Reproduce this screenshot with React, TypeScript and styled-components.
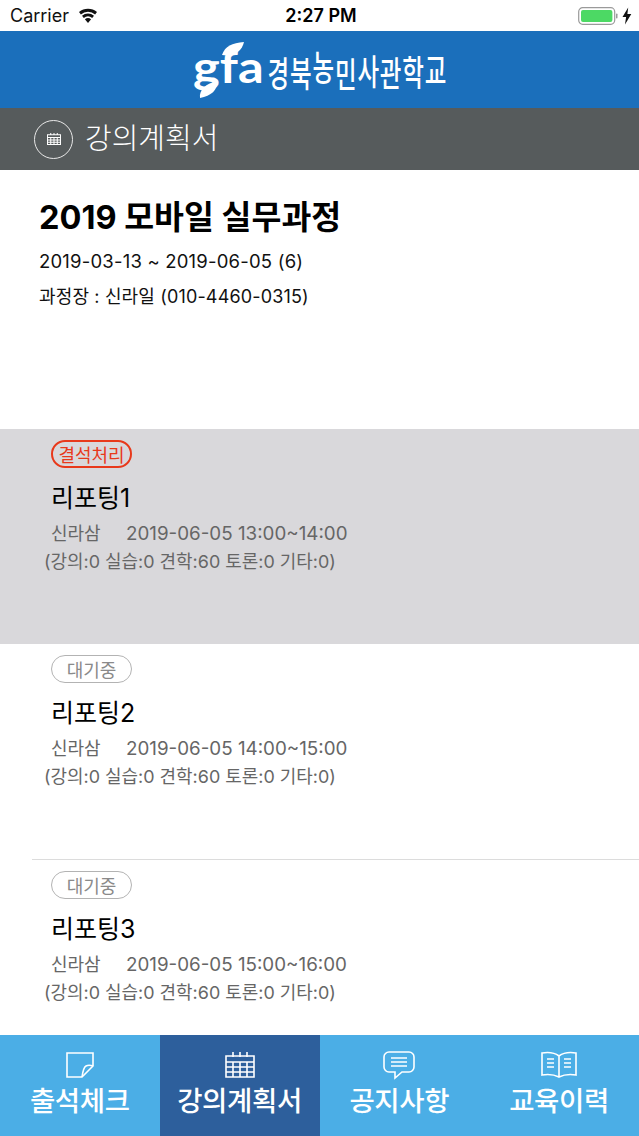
import React from "react";
import styled, { createGlobalStyle } from "styled-components";

const KR = `"Noto Sans CJK KR", "Inter", "Liberation Sans", sans-serif`;

const GlobalStyle = createGlobalStyle`
    html, body {
        margin: 0;
        padding: 0;
        background: #fff;
    }
    * {
        box-sizing: border-box;
    }
`;

const Page = styled.div`
    width: 639px;
    height: 1136px;
    display: flex;
    flex-direction: column;
    overflow: hidden;
    font-family: ${KR};
    color: #000;
`;

const StatusBar = styled.div`
    height: 31px;
    flex: none;
    display: grid;
    grid-template-columns: 1fr auto 1fr;
    align-items: center;
    padding: 0 7px 0 10px;
    font-family: "Inter", "Liberation Sans", sans-serif;
    background: #fff;
`;

const Carrier = styled.div`
    display: flex;
    align-items: center;
    gap: 9px;
    font-size: 18px;
    color: #111;
`;

const Clock = styled.div`
    font-weight: 600;
    font-size: 18px;
`;

const Power = styled.div`
    display: flex;
    justify-content: flex-end;
    align-items: center;
    gap: 4px;
`;

const Header = styled.header`
    height: 77px;
    flex: none;
    background: #1b6fbb;
    display: flex;
    align-items: center;
    justify-content: center;
    color: #fff;
`;

const LogoMark = styled.div`
    position: relative;
    display: flex;
    align-items: center;
    width: 75px;
    height: 77px;
`;

const LogoLetters = styled.span`
    font-family: "Lato", "Open Sans", sans-serif;
    font-weight: 700;
    font-size: 43px;
    line-height: 1;
    margin-top: -7px;
    transform: scaleX(1.18);
    transform-origin: left center;
`;

const LogoLeaf = styled.svg`
    position: absolute;
    left: 0;
    top: 0;
`;

const LogoName = styled.div`
    display: flex;
    width: 179px;
    justify-content: space-between;
    font-size: 23.5px;
    font-weight: 500;
    line-height: 1;
`;

const LogoChar = styled.span<{ $shift: number }>`
    display: block;
    transform: translateY(${(p) => p.$shift}px) scaleY(1.5);
`;

const SubHeader = styled.div`
    height: 62px;
    flex: none;
    background: #565b5c;
    display: flex;
    align-items: center;
    padding-left: 34px;
    gap: 12px;
    color: #fff;
    font-size: 29px;
    font-weight: 300;
    line-height: 1;
`;

const SubHeaderText = styled.span`
    margin-top: -6px;
`;

const RoundIcon = styled.div`
    width: 39px;
    height: 39px;
    border: 1px solid #e8e8e8;
    border-radius: 50%;
    display: flex;
    align-items: center;
    justify-content: center;
`;

const Course = styled.section`
    height: 259px;
    flex: none;
    padding: 26px 0 0 39px;
`;

const CourseTitle = styled.h1`
    margin: 0;
    font-family: "Inter", ${KR};
    font-size: 32.5px;
    line-height: 44px;
    font-weight: 700;
`;

const CourseDates = styled.div`
    font-size: 18.5px;
    letter-spacing: 0.2px;
    line-height: 35px;
    margin-top: 4px;
    color: #111;
    font-family: "Inter", ${KR};
`;

const CourseChief = styled(CourseDates)`
    font-size: 18px;
    letter-spacing: 0.15px;
    margin-top: 0;
`;

const Row = styled.article<{ $height: number; $active?: boolean; $line?: boolean }>`
    position: relative;
    height: ${(p) => p.$height}px;
    flex: none;
    background: ${(p) => (p.$active ? "#d9d8db" : "#fff")};
    padding: 11px 0 0 51px;
    ${(p) => (p.$line ? "&::after { content: ''; position: absolute; left: 32px; right: 0; bottom: 0; height: 1px; background: #dcdcdc; }" : "")}
`;

const Badge = styled.div<{ $alert?: boolean }>`
    width: 81px;
    height: 28px;
    border-radius: 14px;
    border: ${(p) => (p.$alert ? "2px solid #e8391b" : "1.5px solid #b3b3b3")};
    color: ${(p) => (p.$alert ? "#e8391b" : "#8a8a8a")};
    font-size: 18px;
    display: flex;
    align-items: center;
    justify-content: center;
    line-height: 1;
`;

const RowTitle = styled.div`
    font-size: 25px;
    line-height: 32px;
    margin-top: 14px;
    font-family: "Inter", ${KR};
`;

const RowMeta = styled.div`
    display: flex;
    color: #666;
    font-size: 18.8px;
    line-height: 28px;
    margin-top: 6px;
    font-family: "Inter", ${KR};
`;

const Teacher = styled.span`
    width: 75px;
    font-size: 18px;
`;

const RowHours = styled.div`
    color: #666;
    font-size: 17.95px;
    line-height: 28px;
    margin-left: -7px;
    font-family: "Inter", ${KR};
`;

const TabBar = styled.nav`
    flex: 1;
    display: grid;
    grid-template-columns: repeat(4, 1fr);
    background: #4baee6;
`;

const Tab = styled.div<{ $active?: boolean }>`
    display: flex;
    flex-direction: column;
    align-items: center;
    padding-top: 15px;
    background: ${(p) => (p.$active ? "#2d5f9c" : "transparent")};
    color: #fff;
`;

const TabIcon = styled.svg`
    width: 34px;
    height: 30px;
    flex: none;
    fill: none;
    stroke: #fff;
    stroke-width: 1.6;
`;

const BookIcon = styled(TabIcon)`
    width: 40px;
`;

const TabLabel = styled.span`
    font-size: 27.5px;
    font-weight: 500;
    line-height: 36px;
    margin-top: 1px;
    letter-spacing: -0.3px;
`;

function CalendarGlyph({ size }: { size: number }) {
    return (
        <svg width={size} height={size} viewBox="0 0 30 30" fill="none" stroke="#fff" strokeWidth={size < 20 ? 2.2 : 1.6}>
            <path d="M1 6h28v21H1zM1 12h28M1 17h28M1 22h28M8 12v15M15 12v15M22 12v15M8 2v5M15 2v5M22 2v5" />
        </svg>
    );
}

const logoChars: [string, number][] = [
    ["경", 3],
    ["북", 3],
    ["농", -3],
    ["민", 4],
    ["사", 1],
    ["관", 3],
    ["학", 2],
    ["교", 0],
];

const rows = [
    { title: "리포팅1", time: "2019-06-05 13:00~14:00", status: "결석처리", alert: true, height: 215 },
    { title: "리포팅2", time: "2019-06-05 14:00~15:00", status: "대기중", height: 216, line: true },
    { title: "리포팅3", time: "2019-06-05 15:00~16:00", status: "대기중", height: 175 },
];

export default function App() {
    return (
        <Page>
            <GlobalStyle />
            <StatusBar>
                <Carrier>
                    Carrier
                    <svg width="20" height="15" viewBox="0 0 20 15" fill="#111">
                        <path d="M10 15 6.9 11.2a5 5 0 0 1 6.2 0z" />
                        <path d="M5.8 9.9 4 7.7a9.4 9.4 0 0 1 12 0l-1.8 2.2a6.600 6.600 0 0 0-8.400 0z" />
                        <path d="M2.9 6.4 1 4.100a14 14 0 0 1 18 0l-1.900 2.300a11 11 0 0 0-14.200 0z" />
                    </svg>
                </Carrier>
                <Clock>2:27 PM</Clock>
                <Power>
                    <svg width="40" height="18" viewBox="0 0 40 18">
                        <rect x="0.7" y="0.7" width="36" height="16.600" rx="4" fill="none" stroke="#9a9a9a" strokeWidth="1.200" />
                        <rect x="3" y="3" width="31.400" height="12" rx="2" fill="#4cd964" />
                        <rect x="38" y="6.500" width="1.500" height="5" rx="0.700" fill="#9a9a9a" />
                    </svg>
                    <svg width="10" height="18" viewBox="0 0 10 17" fill="#111">
                        <path d="M6.200 0 0.500 9.600h3.600L3 17l6.300-10.400H5.400z" />
                    </svg>
                </Power>
            </StatusBar>

            <Header>
                <LogoMark>
                    <LogoLetters>gfa</LogoLetters>
                    <LogoLeaf width="75" height="77" viewBox="0 0 75 77" fill="#fff">
                        <path d="M29 24C32 15 39 12 51 11c-2 9-10 15-22 13z" />
                        <path d="M7 67c-1-8 5-14 17-17 1 9-6 15-17 17z" />
                    </LogoLeaf>
                </LogoMark>
                <LogoName>
                    {logoChars.map(([ch, shift]) => (
                        <LogoChar key={ch} $shift={shift}>
                            {ch}
                        </LogoChar>
                    ))}
                </LogoName>
            </Header>

            <SubHeader>
                <RoundIcon>
                    <CalendarGlyph size={14} />
                </RoundIcon>
                <SubHeaderText>강의계획서</SubHeaderText>
            </SubHeader>

            <Course>
                <CourseTitle>2019 모바일 실무과정</CourseTitle>
                <CourseDates>2019-03-13 ~ 2019-06-05 (6)</CourseDates>
                <CourseChief>과정장 : 신라일 (010-4460-0315)</CourseChief>
            </Course>

            {rows.map((row) => (
                <Row key={row.title} $height={row.height} $active={row.alert} $line={row.line}>
                    <Badge $alert={row.alert}>{row.status}</Badge>
                    <RowTitle>{row.title}</RowTitle>
                    <RowMeta>
                        <Teacher>신라삼</Teacher>
                        {row.time}
                    </RowMeta>
                    <RowHours>(강의:0 실습:0 견학:60 토론:0 기타:0)</RowHours>
                </Row>
            ))}

            <TabBar>
                <Tab>
                    <TabIcon viewBox="0 0 34 30">
                        <path d="M4 3h26v13l-11 11H4z" />
                        <path d="M30 16c-3-1-5-1-7 0-2 1-3 4-4 11" />
                    </TabIcon>
                    <TabLabel>출석체크</TabLabel>
                </Tab>
                <Tab $active>
                    <CalendarGlyph size={30} />
                    <TabLabel>강의계획서</TabLabel>
                </Tab>
                <Tab>
                    <TabIcon viewBox="0 0 34 30">
                        <path d="M7 2h20a5 5 0 0 1 5 5v10a5 5 0 0 1-5 5h-7l-7 6v-6H7a5 5 0 0 1-5-5V7a5 5 0 0 1 5-5z" />
                        <path d="M9 8h16M9 12h16M9 16h16" />
                    </TabIcon>
                    <TabLabel>공지사항</TabLabel>
                </Tab>
                <Tab>
                    <BookIcon viewBox="0 0 40 30">
                        <path d="M20 6C16 3 9 2 3 3v22c6-1 13 0 17 2 4-2 11-3 17-2V3c-6-1-13 0-17 3zM20 6v21" />
                        <path d="M8 9h7M8 13h7M8 17h7M25 9h7M25 13h7M25 17h7" />
                    </BookIcon>
                    <TabLabel>교육이력</TabLabel>
                </Tab>
            </TabBar>
        </Page>
    );
}
